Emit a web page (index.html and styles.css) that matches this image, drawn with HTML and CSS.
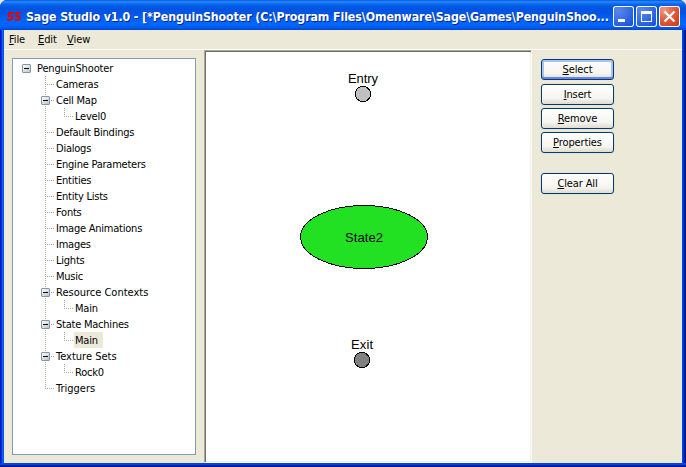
FILE: index.html
```html
<!DOCTYPE html>
<html lang="en">
<head>
<meta charset="utf-8">
<title>Sage Studio</title>
<link rel="stylesheet" href="styles.css">
</head>
<body>
<div class="window">
  <header class="titlebar">
    <svg class="logo" width="14" height="9" viewBox="0 0 14 9" fill="none" stroke="#d90808" stroke-width="2"><path d="M6.500 1H2L1.500 2.500L2 4.300H4.500L5.500 5.500L4.500 7.700H0M14 1H9.500L9 2.500L9.500 4.300H12L13 5.500L12 7.700H7.500"/></svg>
    <h1 class="caption">Sage Studio v1.0 - [*PenguinShooter (C:\Program Files\Omenware\Sage\Games\PenguinShoo...</h1>
    <div class="controls">
      <span class="control"><svg width="21" height="21"><path d="M5 13h7v3H5z" fill="#fff"/></svg></span>
      <span class="control"><svg width="21" height="21"><path d="M5 5h11v11H5zM6 8v7h9V8z" fill="#fff" fill-rule="evenodd"/></svg></span>
      <span class="control close"><svg width="21" height="21"><path d="M5.500 5.500l10 10M15.500 5.500l-10 10" stroke="#fff" stroke-width="2.300"/></svg></span>
    </div>
  </header>
  <nav class="menu"><span class="m-file"><u>F</u>ile</span><span class="m-edit"><u>E</u>dit</span><span class="m-view"><u>V</u>iew</span></nav>
  <main class="content">
    <ul class="tree">
      <li class="root"><i class="box"></i><span>PenguinShooter</span></li>
      <li><i class="branch"></i><span>Cameras</span></li>
      <li><i class="branch open"><i class="box"></i></i><span>Cell Map</span></li>
      <li><i class="trunk"></i><i class="leaf"></i><span>Level0</span></li>
      <li><i class="branch"></i><span>Default Bindings</span></li>
      <li><i class="branch"></i><span>Dialogs</span></li>
      <li><i class="branch"></i><span>Engine Parameters</span></li>
      <li><i class="branch"></i><span>Entities</span></li>
      <li><i class="branch"></i><span>Entity Lists</span></li>
      <li><i class="branch"></i><span>Fonts</span></li>
      <li><i class="branch"></i><span>Image Animations</span></li>
      <li><i class="branch"></i><span>Images</span></li>
      <li><i class="branch"></i><span>Lights</span></li>
      <li><i class="branch"></i><span>Music</span></li>
      <li><i class="branch open"><i class="box"></i></i><span class="wide">Resource Contexts</span></li>
      <li><i class="trunk"></i><i class="leaf"></i><span>Main</span></li>
      <li><i class="branch open"><i class="box"></i></i><span>State Machines</span></li>
      <li><i class="trunk"></i><i class="leaf"></i><span class="selected">Main</span></li>
      <li><i class="branch open"><i class="box"></i></i><span class="wide">Texture Sets</span></li>
      <li><i class="trunk"></i><i class="leaf"></i><span>Rock0</span></li>
      <li><i class="branch last"></i><span class="wide">Triggers</span></li>
    </ul>
    <section class="canvas">
      <svg width="324" height="409" viewBox="206 52 324 409">
        <g stroke="#000" shape-rendering="crispEdges">
          <circle cx="363" cy="94" r="7.700" fill="#c0c0c0"/>
          <ellipse cx="364" cy="237" rx="63.500" ry="31.500" fill="#22e122"/>
          <circle cx="362" cy="360" r="7.700" fill="#808080"/>
        </g>
        <g class="labels">
          <text x="348" y="83" textLength="30">Entry</text>
          <text x="345" y="242" textLength="38">State2</text>
          <text x="351" y="349" textLength="22">Exit</text>
        </g>
      </svg>
    </section>
    <aside class="actions">
      <button class="default"><u>S</u>elect</button>
      <button><u>I</u>nsert</button>
      <button><u>R</u>emove</button>
      <button><u>P</u>roperties</button>
      <button class="clear"><u>C</u>lear All</button>
    </aside>
  </main>
  <div class="frame-bottom"></div>
</div>
</body>
</html>
```
FILE: styles.css
```css
* { box-sizing: border-box; }
html { background: #ece9d8; }
body { margin: 0; font: 11px "DejaVu Sans Condensed", "DejaVu Sans", sans-serif; font-stretch: condensed; letter-spacing: -.12px; color: #000; }
.window { width: 686px; height: 467px; display: flex; flex-direction: column; overflow: hidden; border-radius: 7px 7px 0 0; background: linear-gradient(90deg, #0019cf 0 1px, #0831d9 1px 2px, #1661f0 2px 3px, #0055e5 3px 4px, #0046e0 4px 683px, #0036cf 683px 684px, #001fa8 684px 685px, #00138c 685px); }
.titlebar { height: 30px; flex: none; display: flex; align-items: center; padding: 2px 7px 0; background: linear-gradient(#0058d6 0, #2d8cff 2px, #1673f6 3px, #0562e9 5px, #0054e0 8px, #0055e5 14px, #0064fa 20px, #0066ff 25px, #005ef4 27px, #0046cf 30px); }
.logo { flex: none; margin-right: 5px; }
.caption { margin: 0; padding-top: 2px; width: 586px; flex: none; font: bold 12.3px "DejaVu Sans Condensed", "DejaVu Sans", sans-serif; font-stretch: condensed; letter-spacing: -.105px; color: #fff; text-shadow: 1px 1px #08268a; white-space: nowrap; }
.controls { display: flex; gap: 2px; margin-left: 1px; }
.control { width: 21px; height: 21px; border-radius: 3px; box-shadow: inset 0 0 0 1px #fff; background: radial-gradient(circle at 25% 20%, #5c87ea, #3c71e8 40%, #2259dd 75%, #174acc); }
.control svg { display: block; }
.close { background: radial-gradient(circle at 25% 20%, #ef9a84, #e25f42 40%, #d64520 75%, #b93810); }
.menu { height: 20px; flex: none; display: flex; margin: 0 4px; padding: 2px 0 0 5px; line-height: 15px; background: #ece9d8; border-bottom: 1px solid #fff; }
.menu span { width: 29px; }
.menu .m-view { width: auto; letter-spacing: 0; }
u { text-underline-offset: 1px; text-decoration-thickness: 1px; }
.content { flex: 1; display: flex; margin: 0 4px; background: #ece9d8; }
.frame-bottom { height: 4px; flex: none; background: linear-gradient(#0046e0 0 2px, #0026b4 2px 3px, #00138c 3px); }
.tree { width: 184px; height: 397px; margin: 8px 8px 0; padding: 1px 0 0 9px; list-style: none; background: #fff; border: 1px solid #7f9db9; }
.tree li { display: flex; height: 16px; line-height: 17px; letter-spacing: -.23px; white-space: nowrap; }
.tree i { flex: none; }
.tree span { height: 16px; padding: 0 3px 0 2px; }
.tree .wide { letter-spacing: 0; }
.box { width: 9px; height: 9px; border: 1px solid #7898b5; border-radius: 1px; background: linear-gradient(#000, #000) 1px 3px / 5px 1px no-repeat, linear-gradient(135deg, #fff, #c8c1b3); }
.tree .root { letter-spacing: -.15px; }
.root .box { margin: 4px 4px 0 0; }
.branch, .trunk, .leaf { margin-left: 23px; width: 9px; height: 16px; background: repeating-linear-gradient(#aca899 0 1px, transparent 1px 2px) 0 0 / 1px 16px no-repeat, repeating-linear-gradient(90deg, #aca899 0 1px, transparent 1px 2px) 0 8px / 9px 1px no-repeat; }
.trunk { width: 19px; background-size: 1px 16px, 0 0; }
.leaf { margin-left: 0; }
.leaf, .last { background-size: 1px 8px, 9px 1px; }
.open { margin-left: 19px; width: 13px; padding-top: 4px; background-position: 4px 0, 4px 8px; }
.open .box { display: block; }
.tree .selected { background: #ece9d8; width: 29px; margin-left: 1px; padding-left: 1px; }
.canvas { width: 328px; height: 413px; background: #fff; border: 1px solid; border-color: #aca899 #fff #fff #aca899; box-shadow: inset 1px 1px #716f64, inset -1px -1px #f1efe2; }
.canvas svg { display: block; margin: 1px; }
.labels { font: 13px "Liberation Sans", sans-serif; letter-spacing: 0; }
.actions { display: flex; flex-direction: column; gap: 3px; padding: 9px 0 0 9px; }
.actions button { width: 73px; height: 21px; padding: 1px 0 0; border: 1px solid #003c74; border-radius: 3px; background: linear-gradient(#fff, #f6f5f0 70%, #dedbd0); font: inherit; letter-spacing: inherit; color: #000; line-height: 18px; box-shadow: 0 0 0 1px #e6e3d4; }
.actions .default { margin-bottom: 1px; box-shadow: inset 0 -2px #6982ee, inset 0 0 0 2px #a9c3f1; }
.actions .clear { margin-top: 17px; }
```
